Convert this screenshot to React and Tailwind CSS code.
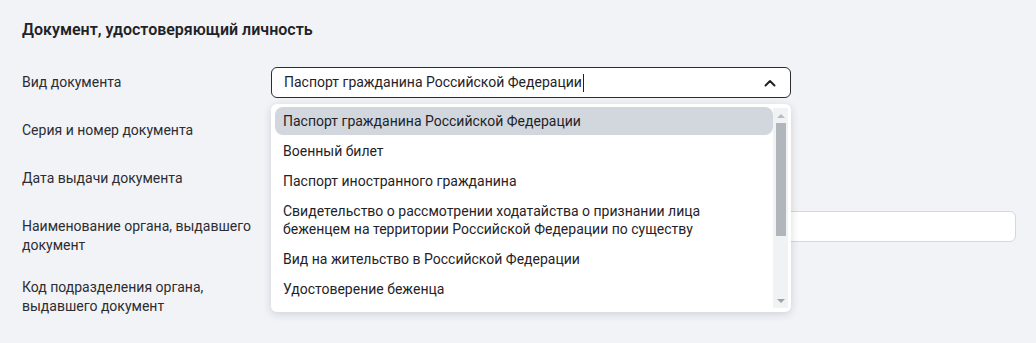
import { useState } from "react";

const options = [
  "Паспорт гражданина Российской Федерации",
  "Военный билет",
  "Паспорт иностранного гражданина",
  "Свидетельство о рассмотрении ходатайства о признании лица беженцем на территории Российской Федерации по существу",
  "Вид на жительство в Российской Федерации",
  "Удостоверение беженца",
];

function ChevronUp() {
  return (
    <svg width="12" height="8" viewBox="0 0 12 8" fill="none">
      <path d="M1.5 6.5L6 2l4.5 4.5" stroke="#1f2328" strokeWidth="2" strokeLinecap="round" strokeLinejoin="round" />
    </svg>
  );
}

function Field({ label, children }) {
  return (
    <div className="grid grid-cols-[249px_1fr] items-start">
      <div className="pt-[6px] pr-4 text-[14px] leading-[19px] text-[#2b2d33]">{label}</div>
      <div>{children}</div>
    </div>
  );
}

function PlainInput({ wide }) {
  return (
    <div
      className={`h-[31px] rounded-[6px] border border-[#d3d7de] bg-white ${
        wide ? "w-full" : "w-[520px]"
      }`}
    />
  );
}

export default function App() {
  const [selected] = useState(0);

  return (
    <div
      className="min-h-[343px] bg-[#f2f3f7] pl-[22px] pr-[20px] pt-[20px]"
      style={{ fontFamily: "Roboto, 'Noto Sans', sans-serif" }}
    >
      <h2 className="text-[16px] leading-[20px] font-semibold text-[#1f2328] mb-[27px]">
        Документ, удостоверяющий личность
      </h2>

      <div className="flex flex-col gap-[17px]">
        <Field label="Вид документа">
          <div className="relative w-[520px]">
            <div className="h-[31px] rounded-[6px] border border-[#2b2d33] bg-white flex items-center pl-[12px] pr-[14px]">
              <span className="text-[14px] text-[#1f2328]">{options[selected]}</span>
              <span className="ml-[1px] h-[18px] w-px bg-[#1f2328]" />
              <span className="ml-auto flex">
                <ChevronUp />
              </span>
            </div>

            {/* выпадающий список */}
            <div className="absolute left-0 top-[37px] z-10 w-[520px] h-[208px] rounded-[6px] bg-white shadow-[0_2px_8px_rgba(20,30,50,0.16)] flex pl-[4px] pr-[3px] py-[3px]">
              <div className="flex-1 flex flex-col gap-[2px] overflow-hidden">
                {options.map((o, i) => (
                  <div
                    key={o}
                    className={`rounded-[8px] px-[8px] py-[5px] text-[14px] leading-[18px] text-[#1f2328] ${
                      i === selected ? "bg-[#d2d7de]" : ""
                    }`}
                  >
                    {i === 3 ? (
                      <>
                        Свидетельство о рассмотрении ходатайства о признании лица
                        <br />
                        беженцем на территории Российской Федерации по существу
                      </>
                    ) : (
                      o
                    )}
                  </div>
                ))}
              </div>
              <div className="w-[15px] mt-px mb-px bg-[#f1f2f4] flex flex-col items-center">
                <div className="h-[15px] flex items-center justify-center">
                  <div className="w-0 h-0 border-l-[4px] border-r-[4px] border-b-[4px] border-l-transparent border-r-transparent border-b-[#b8bcc3]" />
                </div>
                <div className="w-[10px] h-[113px] bg-[#b1b6bd]" />
                <div className="flex-1" />
                <div className="h-[15px] flex items-center justify-center">
                  <div className="w-0 h-0 border-l-[4px] border-r-[4px] border-t-[4px] border-l-transparent border-r-transparent border-t-[#9ea3aa]" />
                </div>
              </div>
            </div>
          </div>
        </Field>

        <Field label="Серия и номер документа">
          <PlainInput />
        </Field>

        <Field label="Дата выдачи документа">
          <PlainInput />
        </Field>

        <Field label="Наименование органа, выдавшего документ">
          <PlainInput wide />
        </Field>

        <Field label="Код подразделения органа, выдавшего документ">
          <PlainInput />
        </Field>
      </div>
    </div>
  );
}
